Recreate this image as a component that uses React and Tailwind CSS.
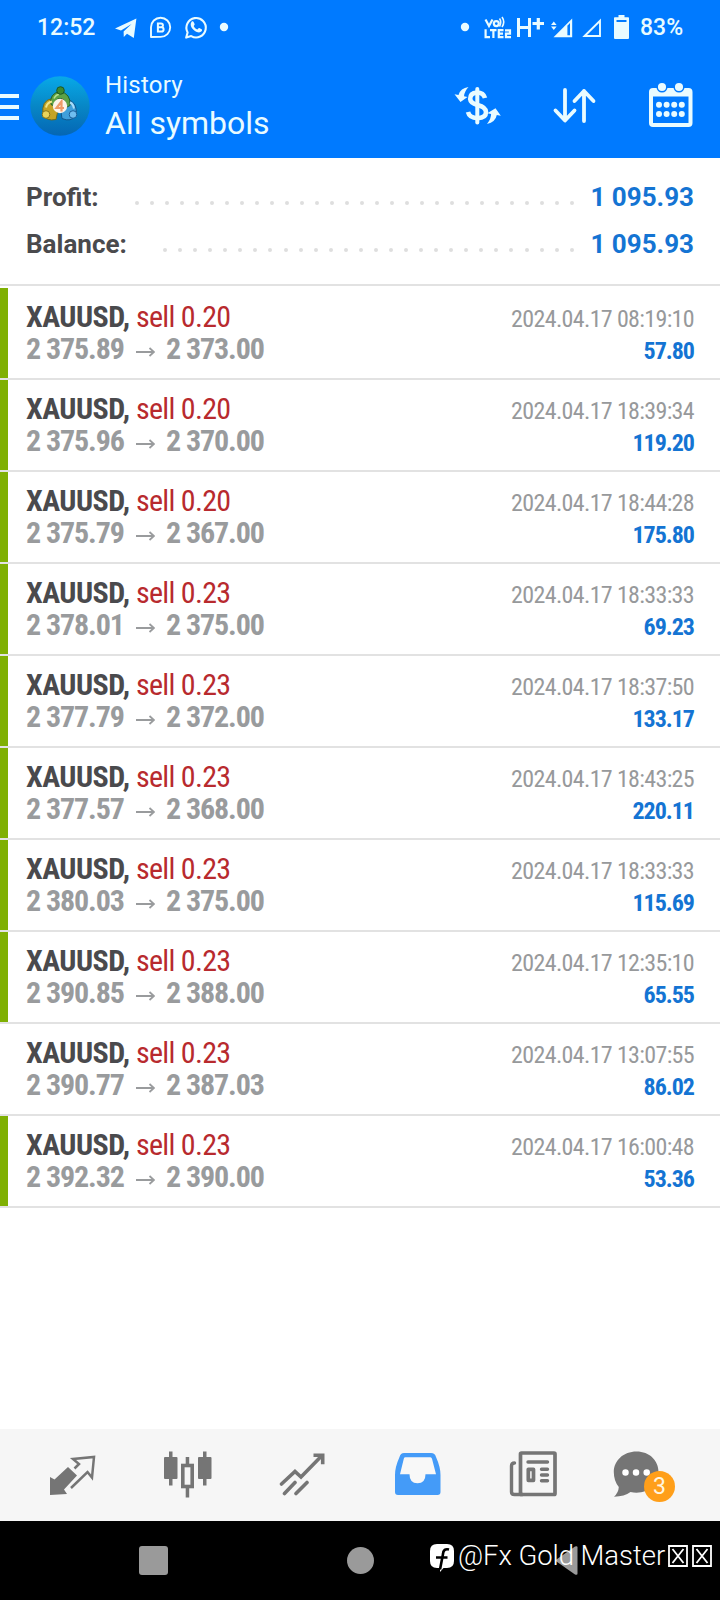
import React from 'react';

const deals = [
  { lot: '0.20', open: '2 375.89', close: '2 373.00', time: '2024.04.17 08:19:10', profit: '57.80', marked: true },
  { lot: '0.20', open: '2 375.96', close: '2 370.00', time: '2024.04.17 18:39:34', profit: '119.20', marked: true },
  { lot: '0.20', open: '2 375.79', close: '2 367.00', time: '2024.04.17 18:44:28', profit: '175.80', marked: true },
  { lot: '0.23', open: '2 378.01', close: '2 375.00', time: '2024.04.17 18:33:33', profit: '69.23', marked: true },
  { lot: '0.23', open: '2 377.79', close: '2 372.00', time: '2024.04.17 18:37:50', profit: '133.17', marked: true },
  { lot: '0.23', open: '2 377.57', close: '2 368.00', time: '2024.04.17 18:43:25', profit: '220.11', marked: true },
  { lot: '0.23', open: '2 380.03', close: '2 375.00', time: '2024.04.17 18:33:33', profit: '115.69', marked: true },
  { lot: '0.23', open: '2 390.85', close: '2 388.00', time: '2024.04.17 12:35:10', profit: '65.55', marked: true },
  { lot: '0.23', open: '2 390.77', close: '2 387.03', time: '2024.04.17 13:07:55', profit: '86.02', marked: false },
  { lot: '0.23', open: '2 392.32', close: '2 390.00', time: '2024.04.17 16:00:48', profit: '53.36', marked: true },
];

const StatusBar = () => (
  <div className="flex h-[53px] items-center pl-[37px] text-[#e9fbff]">
    <span className="w-[78px] pt-[2px] text-[23px] leading-[53px] font-medium">12:52</span>
    <svg className="h-[30px] w-[115px]" viewBox="115 11 115 30" fill="none">
      <path d="M115 27.4 136.400 17.600 133.800 37 127 32.800 123.800 36 123.600 30.600 131.600 23 121 29.600Z" fill="currentColor" />
      <path d="M151 36V26.300a9.600 9.600 0 1 1 9.600 9.600Z" stroke="currentColor" strokeWidth="1.900" strokeLinejoin="round" />
      <path d="M157.900 22.400h3.100a1.900 1.900 0 0 1 0 3.900h-3.100Zm0 3.900h3.600a2 2 0 0 1 0 4.200h-3.600Z" stroke="currentColor" strokeWidth="2" />
      <path d="M186.200 36.600 187.600 31.400A9.700 9.700 0 1 1 191.200 35.100Z" stroke="currentColor" strokeWidth="2.100" strokeLinejoin="round" />
      <path d="M191.600 20.800c.6-.6 1.600-.6 2 .1l1 2.200c.2.500 0 1-.9 2 .8 1.700 2 2.800 3.700 3.500l1.200-1.300c.3-.3.700-.3 1.100-.1l2 1.100c.6.400.4 1.300-.1 2-1.500 1.700-4.300 1.400-7-.6-3-2.200-5.200-6-3-8.900Z" fill="currentColor" />
      <circle cx="224" cy="26" r="4.200" fill="currentColor" />
    </svg>
    <svg className="ml-[230px] h-[36px] w-[171px]" viewBox="460 8 171 36" fill="none">
      <circle cx="465" cy="26" r="4.200" fill="currentColor" />
      <g stroke="currentColor" strokeWidth="2.200">
        <path d="M485.500 18.500 489 25 492.500 18.500" />
        <circle cx="496.300" cy="22.600" r="2.500" />
        <path d="M499.500 17.500q2.500 3.500 0 8M502 16q3.500 5 0 10" strokeWidth="1.600" />
        <path d="M485.600 28.200v7.900h4.400M490 29.200h6.500M493.400 29v8M503.500 29.200h-4.700v6.900h4.700M498.500 32.600h4.500M505 29.300h5v3.400h-4v3.400h5" />
      </g>
      <path d="M518.500 17v19M529.500 17v19M518.500 26.500h11" stroke="currentColor" strokeWidth="3" />
      <path d="M532.500 22.500h11.500M538.300 17v11.500" stroke="currentColor" strokeWidth="3.200" />
      <path d="M551 24l2.800-3.500 2.800 3.500ZM551 25.500l2.800 3.500 2.800-3.500Z" fill="currentColor" />
      <path d="M553.500 36.200 572.200 17.600v18.600Z" fill="currentColor" />
      <path d="M567.400 24.800 570 22v12.200h-2.600Z" fill="#007aff" />
      <path d="M584.600 35 600 19.800v15.200Z" stroke="currentColor" strokeWidth="1.900" />
      <path d="M618.500 14h6v2.200h3.700q.8 0 .8.800v20q0 1-1 1h-13q-1 0-1-1v-20q0-.8.800-.8h3.700Z" fill="currentColor" />
      <path d="M616.500 19h10v2h-10Z" fill="#007aff" />
    </svg>
    <span className="ml-[9px] pt-[2px] text-[23px] leading-[53px] font-medium">83%</span>
  </div>
);

const AppLogo = () => (
  <svg className="mt-[2px] h-[60px] w-[60px]" viewBox="30 75.500 60 60">
    <defs>
      <linearGradient id="logoBg" x1="0" y1="0" x2="0" y2="1">
        <stop offset="0" stopColor="#08a9e8" />
        <stop offset="0.500" stopColor="#0787c6" />
        <stop offset="1" stopColor="#0566b4" />
      </linearGradient>
    </defs>
    <circle cx="60" cy="105.500" r="29.700" fill="url(#logoBg)" />
    <path d="M43 114q-2-14 9-16l7 7-3 14q-10 2-13-5Z" fill="#c4a426" stroke="#6b6a1c" />
    <path d="M76 115q2-13-8-16l-8 6 2 13q9 4 14-3Z" fill="#3f9fdb" stroke="#12568c" />
    <path d="M51 104q-2-11 9-13 11 2 10 14l-4 2q0-9-6-9-5 0-5 8Z" fill="#5da245" stroke="#215f2b" />
    <path d="M46 107q1-5 6-6" stroke="#f0e58a" strokeWidth="2" fill="none" />
    <path d="M74 108q-1-5-4-6" stroke="#a9dcf8" strokeWidth="2" fill="none" />
    <path d="M54 98q2-4 5-4" stroke="#b8e08d" strokeWidth="1.600" fill="none" />
    <circle cx="60.500" cy="90" r="3.800" fill="#3d8a30" stroke="#1c5724" />
    <circle cx="46" cy="114" r="3.800" fill="#ead45b" stroke="#8a761b" />
    <circle cx="73" cy="114" r="3.800" fill="#6fbdf0" stroke="#1a5f9a" />
    <circle cx="60" cy="105.500" r="7.200" fill="#fbf3ea" />
    <path d="M61.500 111v-10l-5 6.500h7.500" stroke="#ee9a68" strokeWidth="2.200" fill="none" />
  </svg>
);

const Header = () => (
  <header className="h-[158px] bg-[#007aff]">
    <StatusBar />
    <div className="flex h-[104px] items-center text-[#e9fbff]">
      <div className="mt-[3px] flex w-[30px] flex-col gap-[7px]">
        <span className="h-[4px] w-[19px] bg-[#e9fbff]" />
        <span className="h-[4px] w-[19px] bg-[#e9fbff]" />
        <span className="h-[4px] w-[19px] bg-[#e9fbff]" />
      </div>
      <AppLogo />
      <div className="ml-[15px] w-[344px]">
        <p className="text-[24px] leading-[35px] tracking-[0.2px]">History</p>
        <p className="text-[32px] leading-[40px]">All symbols</p>
      </div>
      <svg className="h-[60px] w-[246px]" viewBox="449 75 246 60" fill="none" stroke="currentColor">
        <path d="M485 98q-1.500-5.500-8-5.500-7 .5-6.800 6.500.3 4 7.300 6 8.500 2.300 8.500 7 0 6-8.500 6.200-8-.2-9.500-6.200" strokeWidth="4.600" />
        <path d="M477.300 89v33.500" strokeWidth="4" strokeLinecap="round" />
        <path d="M468.500 87q-8 1-10 8l-4-.7 6 7.700 7-5-3.500-.8q.5-5 4.500-9.200Z" fill="currentColor" stroke="none" />
        <path d="M487 124q8.500-2 9.800-9l4 .8-5.300-7.500-8.200 5 3.800.8q0 5-4.100 9.900Z" fill="currentColor" stroke="none" />
        <path d="M565 90v30M555.500 110.500l9.500 10 9.500-10M584 121V91M574.500 101l9.500-10 9.500 10" strokeWidth="3.800" strokeLinecap="round" strokeLinejoin="round" />
        <rect x="651" y="90" width="39.500" height="35" rx="2" strokeWidth="4" />
        <path d="M650 90h41v6.500h-41Z" fill="currentColor" stroke="none" />
        <circle cx="662" cy="87" r="4.800" fill="currentColor" stroke="#007aff" strokeWidth="1.500" />
        <circle cx="679" cy="87" r="4.800" fill="currentColor" stroke="#007aff" strokeWidth="1.500" />
        <path d="M659 104.700h.01M666.600 104.700h.01M674.200 104.700h.01M681.800 104.700h.01M659 114h.01M666.600 114h.01M674.200 114h.01M681.800 114h.01" strokeWidth="6" strokeLinecap="round" />
      </svg>
    </div>
  </header>
);

const SummaryRow = ({ label, value, dots, labelClass }) => (
  <div className="flex h-[47px] items-center text-[26px] leading-[47px]">
    <span className={`font-bold text-[#4a4a4d] ${labelClass}`}>{label}</span>
    <div className="mt-[10px] mr-[14px] flex flex-1 items-center justify-between">
      {Array.from({ length: dots }).map((_, idx) => (
        <span key={idx} className="h-[4px] w-[4px] rounded-full bg-[#dedede]" />
      ))}
    </div>
    <span className="w-[106px] text-right font-bold whitespace-nowrap text-[#1474d3]">{value}</span>
  </div>
);

const DealRow = ({ deal }) => (
  <div className="flex h-[92px] border-b-2 border-[#e2e2e2] font-stretch-condensed">
    <div className={deal.marked ? 'w-[8px] bg-[#7fb003]' : 'w-[8px]'} />
    <div className="flex flex-1 justify-between pr-[26px] pl-[18px] font-['Roboto_Condensed','Roboto']">
      <div className="pt-[13px] text-[30px] leading-[32px]">
        <p>
          <span className="font-bold tracking-[-0.55px] text-[#4a4a4d]">XAUUSD, </span>
          <span className="tracking-[-0.7px] text-[#b82a2e]">sell {deal.lot}</span>
        </p>
        <p className="flex items-center font-bold tracking-[-1.1px] text-[#999b9d]">
          <span className="w-[110px]">{deal.open}</span>
          <svg className="mt-[5px] mr-[11px] h-[10px] w-[19px]" viewBox="0 0 19 10" fill="none" stroke="currentColor" strokeWidth="1.800">
            <path d="M0 5h18M13.500 1l4.500 4-4.500 4" />
          </svg>
          <span>{deal.close}</span>
        </p>
      </div>
      <div className="pt-[15px] text-right text-[24px] leading-[32px]">
        <p className="tracking-[-0.65px] text-[#97999b]">{deal.time}</p>
        <p className="font-bold tracking-[-1px] text-[#1474d3]">{deal.profit}</p>
      </div>
    </div>
  </div>
);

const TabBar = () => (
  <nav className="flex h-[92px] items-center bg-[#f6f6f6] pl-[49px] text-[#757575]">
    <svg className="h-[50px] w-[47px]" viewBox="49 1450 47 50" fill="currentColor">
      <path d="M50 1477l4.500 2.500 13.500-12.500 9 8.500-13 14 3 4.500-17 1Z" />
      <path d="M71 1488 87.500 1472l4.500 5.500 2-20.500-21 2 6 5-4.500 4.500" fill="none" stroke="currentColor" strokeWidth="2.500" />
    </svg>
    <svg className="ml-[67px] h-[50px] w-[49px]" viewBox="163 1450 49 50" fill="currentColor">
      <path d="M169 1451.500h3.500v34h-3.500ZM203 1451.500h3.500v34h-3.500ZM185.700 1457h3.500v8h-3.500ZM185.700 1487h3.500v10.500h-3.500Z" />
      <rect x="164" y="1457" width="13.500" height="22" rx="1" />
      <rect x="198" y="1457" width="13.500" height="22" rx="1" />
      <rect x="182.800" y="1465.500" width="9.400" height="21" fill="none" stroke="currentColor" strokeWidth="3.600" />
    </svg>
    <svg className="ml-[67px] h-[50px] w-[47px]" viewBox="279 1450 47 50" fill="none" stroke="currentColor" strokeWidth="3.600" strokeLinecap="round">
      <path d="M281.500 1484 295 1471.500l6 5.500 20-20.500M284.500 1493.500l10.500-11M296 1493.500l11-11" />
      <path d="M313.500 1455.300h9.200v9" strokeLinecap="butt" />
    </svg>
    <svg className="ml-[68px] h-[50px] w-[48px]" viewBox="394 1450 48 50">
      <path d="M404 1453h27q4 0 5 4 4.500 10 4.500 18v17q0 3-3 3h-39.500q-3 0-3-3v-17q0-8 4.500-18 1-4 4.500-4Z" fill="#449bf8" />
      <path d="M405 1457.300h25.500q1 0 1.500 1.500l4 15.500H425.500q0 9-8 9t-8-9h-9.500l3.800-15.500q.2-1.500 1.200-1.500Z" fill="#f8f8f8" />
    </svg>
    <svg className="ml-[67px] h-[50px] w-[49px]" viewBox="509 1450 49 50" fill="none" stroke="currentColor" strokeWidth="3.700" strokeLinecap="round" strokeLinejoin="round">
      <rect x="520.500" y="1453" width="34.500" height="41.500" rx="1" />
      <path d="M514.500 1463q-3 0-3 3v26q0 2.500 3 2.500h8M528 1462h19.500M541.500 1469.200h6M541.500 1475h6M541.500 1480.700h6" strokeWidth="3.400" />
      <rect x="528.300" y="1469.300" width="5.200" height="11" />
    </svg>
    <div className="relative ml-[55px] h-[52px] w-[63px]">
      <svg className="h-[52px] w-[48px]" viewBox="613 1449 48 52" fill="currentColor">
        <path d="M636.500 1451.500c13 0 22 9 22 20.500s-9 20.700-22 20.700q-3 0-6-.7-6 4.500-16.500 4.700 4.500-4 4.800-9.700-5-6-5-15c0-11.500 9.700-20.500 22.700-20.500Z" />
        <path d="M625.500 1472.500h.01M636 1472.500h.01M646.700 1472.500h.01" stroke="#fff" strokeWidth="6.500" strokeLinecap="round" />
      </svg>
      <span className="absolute top-[22px] left-[31px] h-[31px] w-[31px] rounded-full bg-[#ff9f1a] text-center text-[23px] leading-[32px] text-[#fff6e0]">3</span>
    </div>
  </nav>
);

const MissingGlyph = () => (
  <svg className="h-[22px] w-[20px]" viewBox="0 0 20 22" fill="none" stroke="currentColor" strokeWidth="1.800">
    <path d="M1 1h18v20H1ZM4.500 4l11 14M15.500 4l-11 14" />
  </svg>
);

const SystemNav = () => (
  <div className="relative flex h-[79px] items-center bg-black pl-[139px]">
    <span className="h-[29px] w-[29px] rounded-[3px] bg-[#9a9a9a]" />
    <span className="ml-[179px] h-[27px] w-[27px] rounded-full bg-[#9a9a9a]" />
    <svg className="ml-[180px] h-[31px] w-[25px]" viewBox="0 0 25 31">
      <path d="M1 15.500 21 1.500q2.500-1 2.500 1v26q0 2-2.500 1Z" fill="#9a9a9a" />
    </svg>
    <div className="absolute top-[16px] left-[429px] flex items-center text-white">
      <svg className="mt-[4px] h-[30px] w-[26px]" viewBox="0 0 26 30">
        <path d="M8 1h10q7 0 7 7v10q0 7-7 7h-3.500l-3.500 4v-4H8q-7 0-7-7V8q0-7 7-7Z" fill="currentColor" />
        <path d="M20 6.500q-5.500-1.500-6 4.500L11 26.500M7 14.500h11.500" fill="none" stroke="#000" strokeWidth="2.600" />
      </svg>
      <span className="mt-[1px] ml-[3px] w-[210px] text-[27.500px] leading-[36px] font-[350] tracking-[-0.05px] whitespace-nowrap">@Fx Gold Master</span>
      <div className="flex gap-[4px]">
        <MissingGlyph />
        <MissingGlyph />
      </div>
    </div>
  </div>
);

export default function App() {
  return (
    <div className="flex h-[1600px] w-[720px] flex-col overflow-hidden bg-white font-['Roboto','Liberation_Sans',sans-serif]">
      <Header />
      <section className="mb-[2px] border-b-2 border-[#e2e2e2] px-[26px] pt-[16px] pb-[16px]">
        <SummaryRow label="Profit:" value="1 095.93" dots={30} labelClass="w-[109px]" />
        <SummaryRow label="Balance:" value="1 095.93" dots={28} labelClass="w-[137px]" />
      </section>
      <main className="flex-1">
        {deals.map((deal, idx) => (
          <DealRow key={idx} deal={deal} />
        ))}
      </main>
      <TabBar />
      <SystemNav />
    </div>
  );
}
